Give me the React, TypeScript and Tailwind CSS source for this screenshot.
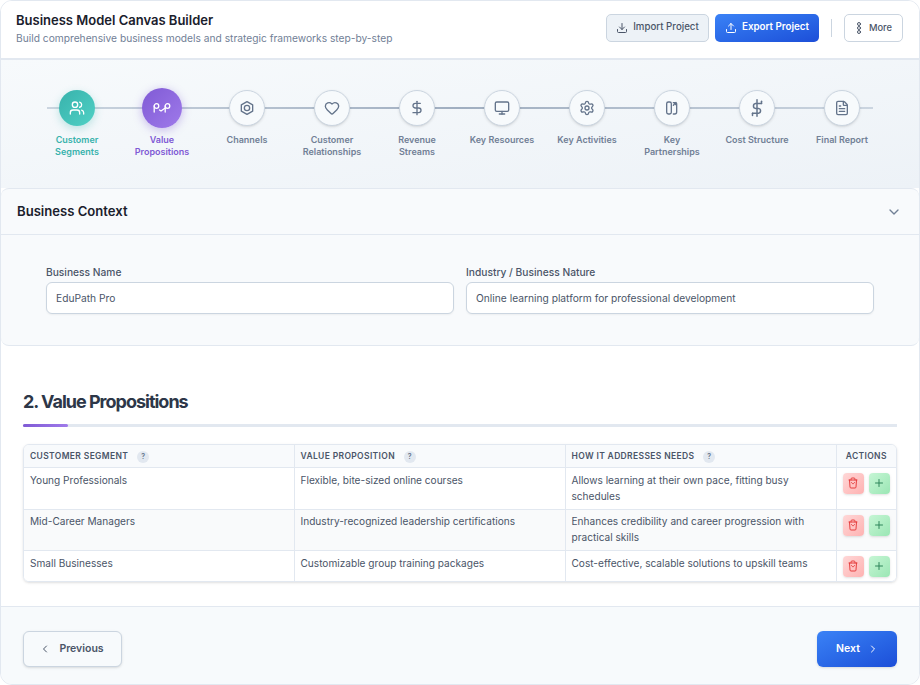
import { ChevronDown, ChevronLeft, ChevronRight, DollarSign, Download, FileText, Heart, Monitor, Plus, Settings, Upload, Users } from "lucide-react";
import type { ReactNode } from "react";

const svgProps = {
  fill: "none",
  stroke: "currentColor",
  strokeWidth: 2,
  strokeLinecap: "round" as const,
  strokeLinejoin: "round" as const,
  viewBox: "0 0 24 24",
};

function RouteIcon() {
  return (
    <svg {...svgProps} strokeWidth={1.3} className="h-[10px] w-[18px]" viewBox="0 0 18 10">
      <circle cx="3.500" cy="3" r="2.300" />
      <path d="M1.200 3v6" />
      <circle cx="14.500" cy="3" r="2.300" />
      <path d="M12.200 3v6" />
      <path d="M6.500 7l1.500 1 4.200-3" />
    </svg>
  );
}

function NutIcon() {
  return (
    <svg {...svgProps} className="h-4 w-4">
      <path d="M12 2.500l8.500 4.800v9.400L12 21.500l-8.500-4.800V7.300z" />
      <circle cx="12" cy="12" r="4" />
    </svg>
  );
}

function PartnerIcon() {
  return (
    <svg {...svgProps} className="h-4 w-4">
      <rect x="4" y="3" width="7" height="18" rx="2.500" />
      <path d="M14 21h2a3 3 0 0 0 3-3V6a3 3 0 0 0-1-2.200" />
      <path d="M14 8l3-4" />
      <path d="M14 4h3v3" />
    </svg>
  );
}

function CostIcon() {
  return (
    <svg {...svgProps} className="h-[18px] w-[18px]">
      <path d="M12 1v22" />
      <path d="M18 6H10a3.300 3.300 0 0 0 0 6.500h4a3.300 3.300 0 0 1 0 6.500H6" />
      <path d="M6 19v3" />
      <path d="M18 6V3" />
    </svg>
  );
}

function StackIcon() {
  return (
    <svg {...svgProps} className="h-3 w-3">
      <circle cx="12" cy="4" r="3" />
      <circle cx="12" cy="12" r="3" />
      <circle cx="12" cy="20" r="3" />
    </svg>
  );
}

function BinIcon() {
  return (
    <svg {...svgProps} className="h-3 w-3">
      <path d="M4 6h16" />
      <path d="M8 6V4a2 2 0 0 1 2-2h4a2 2 0 0 1 2 2v2" />
      <path d="M5 6l1 14a2 2 0 0 0 2 2h8a2 2 0 0 0 2-2l1-14" />
      <path d="M9 11c1 3.500 5 3.500 6 0" />
    </svg>
  );
}

type Step = {
  label: ReactNode;
  icon: ReactNode;
  state?: "done" | "active";
};

const steps: Step[] = [
  { label: <>Customer<br />Segments</>, icon: <Users className="h-4 w-4" />, state: "done" },
  { label: <>Value<br />Propositions</>, icon: <RouteIcon />, state: "active" },
  { label: "Channels", icon: <NutIcon /> },
  { label: <>Customer<br />Relationships</>, icon: <Heart className="h-4 w-4" /> },
  { label: <>Revenue<br />Streams</>, icon: <DollarSign className="h-4 w-4" /> },
  { label: "Key Resources", icon: <Monitor className="h-4 w-4" /> },
  { label: "Key Activities", icon: <Settings className="h-4 w-4" /> },
  { label: <>Key<br />Partnerships</>, icon: <PartnerIcon /> },
  { label: "Cost Structure", icon: <CostIcon /> },
  { label: "Final Report", icon: <FileText className="h-4 w-4" /> },
];

const rows = [
  {
    segment: "Young Professionals",
    value: "Flexible, bite-sized online courses",
    needs: "Allows learning at their own pace, fitting busy schedules",
    rowClass: "h-[42px] bg-white",
    cellClass: "pt-[4px]",
  },
  {
    segment: "Mid-Career Managers",
    value: "Industry-recognized leadership certifications",
    needs: "Enhances credibility and career progression with practical skills",
    rowClass: "h-[41px] bg-[#f9fafb]",
    cellClass: "pt-[3px]",
  },
  {
    segment: "Small Businesses",
    value: "Customizable group training packages",
    needs: "Cost-effective, scalable solutions to upskill teams",
    rowClass: "h-[31px] bg-white",
    cellClass: "pt-[4px]",
  },
];

function Hint() {
  return (
    <span className="ml-[9px] inline-flex h-3 w-3 items-center justify-center rounded-full bg-[#e2e8f0] text-[7px] font-semibold text-[#64748b]">
      ?
    </span>
  );
}

function StepItem({ step }: { step: Step }) {
  const active = step.state === "active";
  const done = step.state === "done";
  return (
    <div className="relative flex w-[85px] flex-col items-center">
      <div className="flex h-10 items-center justify-center">
        {active ? (
          <div className="flex h-10 w-10 items-center justify-center rounded-full bg-gradient-to-br from-[#805ad5] to-[#9f7aea] text-white shadow-[0_2px_10px_rgba(128,90,213,0.4)]">
            {step.icon}
          </div>
        ) : done ? (
          <div className="flex h-9 w-9 items-center justify-center rounded-full bg-gradient-to-br from-[#38b2ac] to-[#4fd1c5] text-white shadow-[0_3px_8px_rgba(56,178,172,0.3)]">
            {step.icon}
          </div>
        ) : (
          <div className="flex h-9 w-9 items-center justify-center rounded-full border border-[#cbd5e0] bg-[#f7fafc] text-[#64748b] shadow-sm">
            {step.icon}
          </div>
        )}
      </div>
      <div
        className={`mt-[6px] text-center text-[9px] font-semibold leading-3 ${
          active ? "text-[#805ad5]" : done ? "text-[#38b2ac]" : "text-[#718096]"
        }`}
      >
        {step.label}
      </div>
    </div>
  );
}

export default function App() {
  return (
    <div className="h-[685px] w-[920px] overflow-hidden bg-white font-['Inter',sans-serif] text-[#2d3748]">
      <div className="flex h-full flex-col overflow-hidden rounded-xl border border-[#e2e8f0]">
        {/* Header */}
        <div className="flex h-[59px] shrink-0 items-center justify-between border-b-2 border-[#e2e8f0] bg-white pb-[2px] pl-[15px] pr-4">
          <div>
            <h1 className="text-[13px] font-semibold leading-4 text-[#1a202c]">Business Model Canvas Builder</h1>
            <p className="mt-[3px] text-[10.230px] leading-[14px] text-[#718096]">
              Build comprehensive business models and strategic frameworks step-by-step
            </p>
          </div>
          <div className="mb-[2px] flex items-center">
            <button className="flex h-7 w-[103px] items-center justify-center gap-[5px] rounded-[5px] border border-[#cbd5e0] bg-[#edf2f7] text-[9.700px] font-medium text-[#4a5568]">
              <Download className="h-3 w-3" /> Import Project
            </button>
            <button className="ml-[6px] flex h-7 w-[104px] items-center justify-center gap-[5px] rounded-[5px] bg-gradient-to-br from-[#3b82f6] to-[#1d4ed8] text-[9.800px] font-semibold text-white">
              <Upload className="h-3 w-3" /> Export Project
            </button>
            <div className="mx-3 h-[18px] w-px bg-[#cbd5e0]" />
            <button className="flex h-7 w-[59px] items-center justify-center gap-[4px] rounded-[5px] border border-[#cbd5e0] bg-white pr-[2px] text-[9.300px] font-medium text-[#4a5568]">
              <StackIcon /> More
            </button>
          </div>
        </div>

        {/* Stepper */}
        <div className="flex h-[128px] shrink-0 justify-center bg-gradient-to-br from-[#f7fafc] to-[#edf2f7] pr-[1px] pt-[28px]">
          <div className="relative flex h-fit">
            <div className="absolute left-[12.500px] right-[11.500px] top-[19px] h-[2px] bg-gradient-to-r from-[#cbd5e0] via-[#a0aec0] to-[#cbd5e0]" />
            {steps.map((s, i) => (
              <StepItem key={i} step={s} />
            ))}
          </div>
        </div>

        {/* Business context */}
        <div className="h-[158px] shrink-0 rounded-lg border-y border-[#e2e8f0] bg-[#f8fafc]">
          <div className="flex h-[46px] items-center justify-between border-b border-[#e2e8f0] pl-[16px] pr-[17px]">
            <h2 className="text-[13.100px] font-semibold text-[#1a202c]">Business Context</h2>
            <ChevronDown className="h-4 w-4 text-[#718096]" />
          </div>
          <div className="flex gap-3 pl-[45px] pr-[45px] pt-[30px]">
            <label className="flex-1">
              <span className="block text-[10.230px] font-medium leading-[14px] text-[#4a5568]">Business Name</span>
              <input
                readOnly
                value="EduPath Pro"
                className="mt-[3px] h-8 w-full rounded-md border border-[#cbd5e0] bg-white px-[9px] text-[10.230px] text-[#4a5568] shadow-[0_1px_2px_rgba(0,0,0,0.05)] outline-none"
              />
            </label>
            <label className="flex-1">
              <span className="block text-[10.230px] font-medium leading-[14px] text-[#4a5568]">Industry / Business Nature</span>
              <input
                readOnly
                value="Online learning platform for professional development"
                className="mt-[3px] h-8 w-full rounded-md border border-[#cbd5e0] bg-white px-[9px] text-[10.230px] text-[#4a5568] shadow-[0_1px_2px_rgba(0,0,0,0.05)] outline-none"
              />
            </label>
          </div>
        </div>

        {/* Section */}
        <div className="flex-1 bg-white px-[22px] pt-[44px]">
          <h2 className="text-[18px] font-bold leading-6 tracking-[-1px] text-[#2d3748]">2. Value Propositions</h2>
          <div className="mt-[10px] h-[3px] bg-[#e2e8f0]">
            <div className="h-full w-[45px] rounded-full bg-gradient-to-r from-[#805ad5] to-[#9f7aea]" />
          </div>
          <div className="mt-[17px] overflow-hidden rounded-md border border-[#e2e8f0] shadow-sm">
            <table className="w-full table-fixed border-collapse text-[10.100px] text-[#4a5568]">
              <colgroup>
                <col className="w-[270px]" />
                <col className="w-[271px]" />
                <col className="w-[271px]" />
                <col />
              </colgroup>
              <thead className="bg-[#f8fafc]">
                <tr className="h-[22px] border-b border-[#e2e8f0] text-left text-[8.500px] font-semibold uppercase tracking-[0.35px]">
                  <th className="border-r border-[#e2e8f0] pl-[6px] pt-[2px] font-semibold">Customer Segment<Hint /></th>
                  <th className="border-r border-[#e2e8f0] pl-[6px] pt-[2px] font-semibold">Value Proposition<Hint /></th>
                  <th className="border-r border-[#e2e8f0] pl-[6px] pt-[2px] font-semibold">How It Addresses Needs<Hint /></th>
                  <th className="pt-[2px] text-center font-semibold">Actions</th>
                </tr>
              </thead>
              <tbody>
                {rows.map((r) => (
                  <tr key={r.segment} className={`border-b border-[#e2e8f0] last:border-b-0 ${r.rowClass}`}>
                    <td className={`border-r border-[#e2e8f0] px-[6px] align-top leading-4 ${r.cellClass}`}>{r.segment}</td>
                    <td className={`border-r border-[#e2e8f0] px-[6px] align-top leading-4 ${r.cellClass}`}>{r.value}</td>
                    <td className={`border-r border-[#e2e8f0] px-[6px] align-top leading-4 ${r.cellClass}`}>{r.needs}</td>
                    <td className="pl-[6px] pt-[5px] align-top">
                      <div className="flex gap-[5px]">
                        <button className="flex h-[21px] w-[21px] items-center justify-center rounded-[4px] bg-gradient-to-br from-[#fed7d7] to-[#feb2b2] text-[#e53e3e] shadow-sm">
                          <BinIcon />
                        </button>
                        <button className="flex h-[21px] w-[21px] items-center justify-center rounded-[4px] bg-gradient-to-br from-[#c6f6d5] to-[#9ae6b4] text-[#2f855a] shadow-sm">
                          <Plus className="h-3 w-3" />
                        </button>
                      </div>
                    </td>
                  </tr>
                ))}
              </tbody>
            </table>
          </div>
        </div>

        {/* Footer */}
        <div className="flex h-[78px] shrink-0 items-start justify-between border-t border-[#e2e8f0] bg-[#f7fafc] px-[22px] pt-6">
          <button className="flex h-9 w-[99px] items-center justify-center gap-[8px] rounded-md border border-[#cbd5e0] bg-[#f7fafc] pr-[2px] text-[10.500px] font-semibold text-[#4a5568] shadow-sm">
            <ChevronLeft className="h-3 w-3" /> Previous
          </button>
          <button className="flex h-9 w-20 items-center justify-center gap-[7px] rounded-md bg-gradient-to-br from-[#3b82f6] to-[#1d4ed8] pl-[1px] text-[10.500px] font-semibold text-white shadow-sm">
            Next <ChevronRight className="h-3 w-3" />
          </button>
        </div>
      </div>
    </div>
  );
}
